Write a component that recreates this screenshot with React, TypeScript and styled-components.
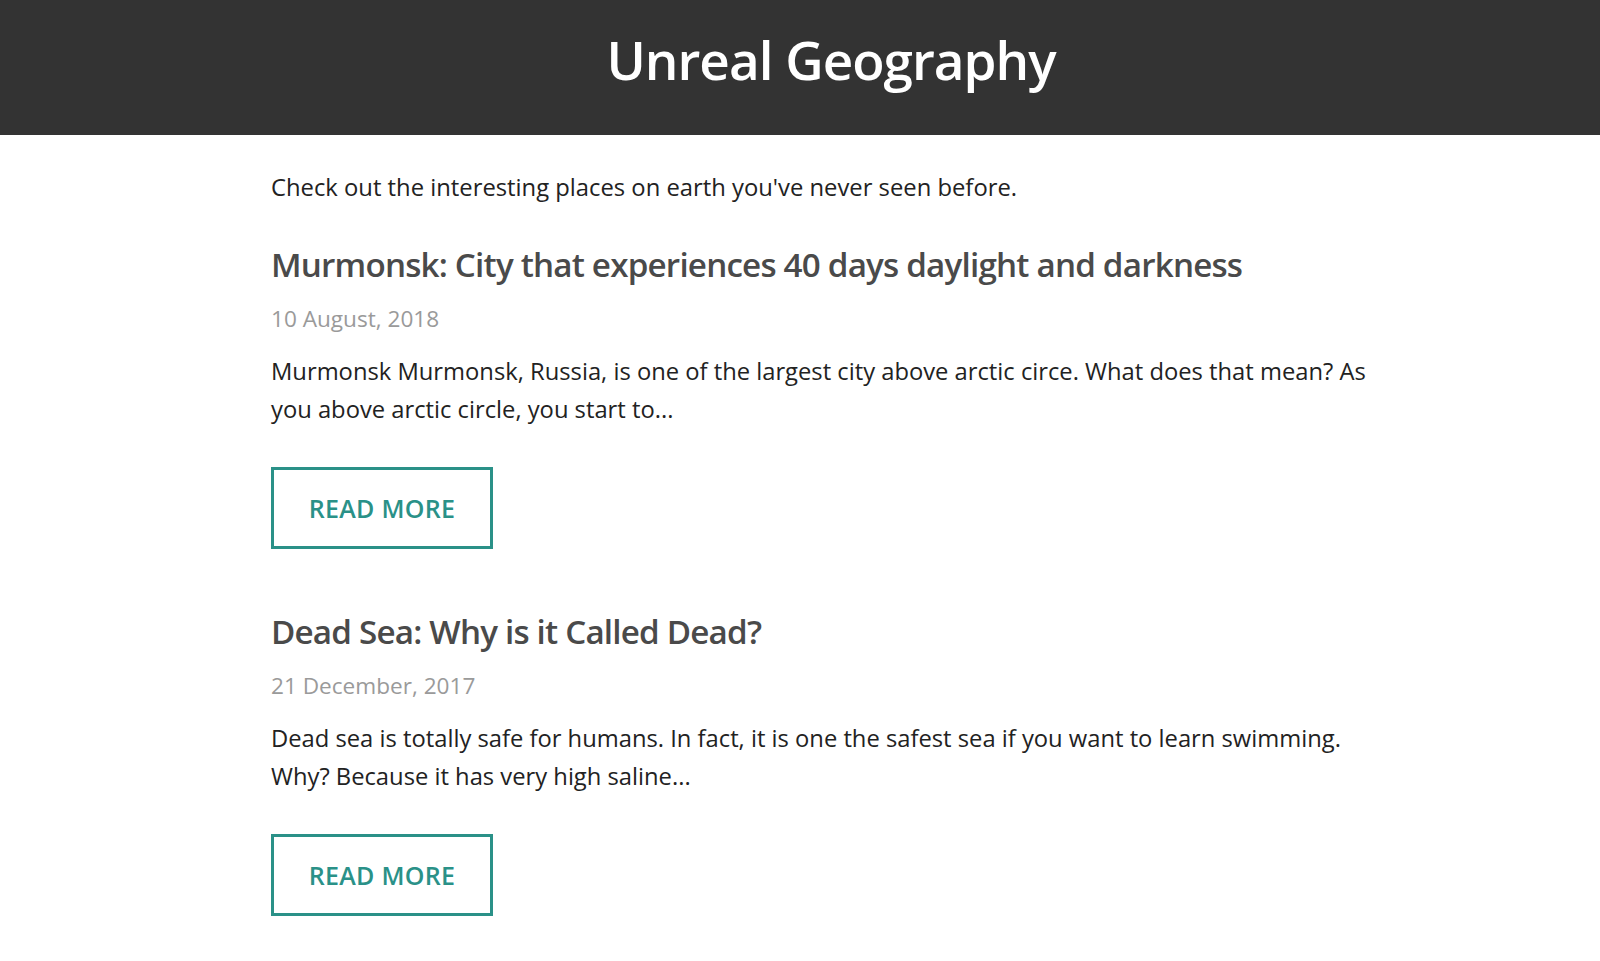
import React from "react";
import styled, { createGlobalStyle } from "styled-components";

const Global = createGlobalStyle`
  html, body { margin: 0; padding: 0; background: #ffffff; }
  body { font-family: "Open Sans", "Noto Sans", sans-serif; -webkit-font-smoothing: antialiased; }
  * { box-sizing: border-box; }
`;

const Header = styled.header`
  height: 135px;
  background: #333333;
  display: flex;
  align-items: center;
  justify-content: center;
`;

const SiteTitle = styled.h1`
  margin: 0;
  color: #ffffff;
  font-size: 53px;
  font-weight: 600;
  letter-spacing: -1px;
  padding-left: 62px;
  padding-bottom: 16px;
`;

const Main = styled.main`
  padding: 0 0 40px 271px;
`;

const Intro = styled.p`
  margin: 0;
  padding-top: 36px;
  font-size: 23.8px;
  line-height: 32px;
  color: #222222;
`;

const PostList = styled.div`
  display: flex;
  flex-direction: column;
  gap: 61px;
  margin-top: 40px;
`;

const Post = styled.article`
  display: flex;
  flex-direction: column;
  align-items: flex-start;
`;

const PostTitle = styled.h2`
  margin: 0;
  font-size: 33.2px;
  font-weight: 600;
  letter-spacing: -0.8px;
  color: #4a4a4a;
  line-height: 44px;
`;

const PostDate = styled.div`
  margin-top: 16px;
  font-size: 22.6px;
  color: #9a9a9a;
  line-height: 32px;
`;

const Excerpt = styled.p`
  margin: 17px 0 0;
  font-size: 23.75px;
  line-height: 38px;
  color: #222222;
  max-width: 1120px;
`;

const ReadMore = styled.a`
  margin-top: 39px;
  width: 222px;
  height: 82px;
  border: 3px solid #2a9188;
  display: flex;
  align-items: center;
  justify-content: center;
  color: #2a9188;
  font-size: 25px;
  font-weight: 600;
  text-decoration: none;
  letter-spacing: 0.3px;
`;

const posts = [
  {
    title: "Murmonsk: City that experiences 40 days daylight and darkness",
    date: "10 August, 2018",
    excerpt:
      "Murmonsk Murmonsk, Russia, is one of the largest city above arctic circe. What does that mean? As you above arctic circle, you start to...",
  },
  {
    title: "Dead Sea: Why is it Called Dead?",
    date: "21 December, 2017",
    excerpt:
      "Dead sea is totally safe for humans. In fact, it is one the safest sea if you want to learn swimming. Why? Because it has very high saline...",
  },
];

export default function App() {
  return (
    <>
      <Global />
      <Header>
        <SiteTitle>Unreal Geography</SiteTitle>
      </Header>
      <Main>
        <Intro>Check out the interesting places on earth you've never seen before.</Intro>
        <PostList>
          {posts.map((p) => (
            <Post key={p.title}>
              <PostTitle>{p.title}</PostTitle>
              <PostDate>{p.date}</PostDate>
              <Excerpt>{p.excerpt}</Excerpt>
              <ReadMore href="#">READ MORE</ReadMore>
            </Post>
          ))}
        </PostList>
      </Main>
    </>
  );
}
